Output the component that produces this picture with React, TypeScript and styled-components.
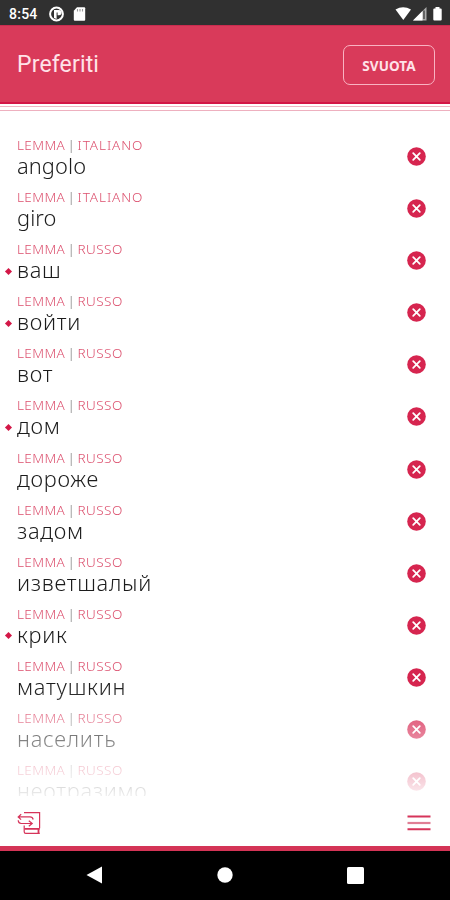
import React, { useState } from 'react';
import styled, { createGlobalStyle } from 'styled-components';

const GlobalStyle = createGlobalStyle`
  * {
    box-sizing: border-box;
  }

  body {
    margin: 0;
    background: #fff;
  }
`;

const Screen = styled.div`
  display: flex;
  flex-direction: column;
  width: 450px;
  height: 900px;
  overflow: hidden;
  background: #fff;
  font-family: 'Noto Sans', 'Open Sans', sans-serif;
`;

const StatusBar = styled.div`
  display: flex;
  align-items: center;
  flex: none;
  height: 25px;
  padding: 2px 6px 0 9px;
  background: #303030;
`;

const Clock = styled.span`
  width: 40px;
  color: #fff;
  font-family: Roboto, sans-serif;
  font-size: 14px;
  font-weight: 500;
  line-height: 24px;
  letter-spacing: 0.25px;
`;

const StatusIcons = styled.svg`
  display: block;
`;

const Spacer = styled.div`
  flex: 1;
`;

const Header = styled.header`
  display: flex;
  align-items: center;
  justify-content: space-between;
  flex: none;
  height: 79px;
  padding: 2px 15px 0 17px;
  background: #d93a5a;
  border-top: 1px solid #c92c4f;
  border-bottom: 2px solid #d31747;
`;

const HeaderLines = styled.div`
  flex: none;
  height: 7px;
  border-bottom: 1px solid #eeb0bf;
  background: linear-gradient(#fff 2px, #efb6c4 2px, #efb6c4 3px, #fff 3px);
`;

const Title = styled.h1`
  margin: 0;
  color: #ffe3e8;
  font-family: Roboto, sans-serif;
  font-size: 23px;
  font-weight: 400;
  line-height: 30px;
  letter-spacing: 0.15px;
`;

const ClearButton = styled.button`
  width: 92px;
  height: 40px;
  padding: 1px 0 0;
  border: 1px solid #f9b3c2;
  border-radius: 7px;
  background: transparent;
  color: #ffe3e8;
  font-family: inherit;
  font-size: 13.5px;
  font-weight: 700;
  letter-spacing: 0.1px;
`;

const List = styled.ul`
  flex: none;
  height: 685px;
  margin: 0;
  padding: 19.5px 0 0;
  overflow: hidden;
  list-style: none;
  mask-image: linear-gradient(#000 575px, rgba(0, 0, 0, 0.08) 685px);
`;

const Row = styled.li`
  display: flex;
  align-items: center;
  height: 52.08px;
  padding: 0 24px 0 5px;
`;

const Marker = styled.span<{ $visible: boolean }>`
  width: 12px;
  height: 7px;
  margin-top: 21px;

  &::before {
    content: '';
    display: ${({ $visible }) => ($visible ? 'block' : 'none')};
    width: 5px;
    height: 5px;
    margin: 1px;
    background: #d31747;
    transform: rotate(45deg);
  }
`;

const Entry = styled.div`
  flex: 1;
  padding-top: 2px;
`;

const Category = styled.div`
  color: #dc506e;
  font-size: 13.5px;
  font-weight: 350;
  line-height: 16px;
  letter-spacing: 0.4px;
  word-spacing: -1.6px;
  white-space: pre;
`;

const Divider = styled.span`
  color: #777;
`;

const Language = styled.span<{ $wide: boolean }>`
  letter-spacing: ${({ $wide }) => ($wide ? '0.95px' : '0.45px')};
`;

const Word = styled.div<{ $cyrillic: boolean }>`
  color: #1c1c1c;
  font-size: 21.8px;
  font-weight: 350;
  line-height: 25px;
  letter-spacing: ${({ $cyrillic }) => ($cyrillic ? '0.75px' : '0.1px')};
`;

const IconButton = styled.button`
  display: block;
  padding: 0;
  border: 0;
  background: transparent;
  line-height: 0;
`;

const Toolbar = styled.div`
  display: flex;
  align-items: center;
  justify-content: space-between;
  flex: none;
  height: 50px;
  padding: 4px 19px 0 17px;
`;

const NavBar = styled.nav`
  display: flex;
  align-items: center;
  justify-content: space-between;
  flex: none;
  height: 54px;
  padding: 0 86px 1px;
  border-top: 5px solid #d43456;
  background: #000;
`;

interface Favorite {
  word: string;
  language: 'ITALIANO' | 'RUSSO';
  marked?: boolean;
}

const favorites: Favorite[] = [
  { word: 'angolo', language: 'ITALIANO' },
  { word: 'giro', language: 'ITALIANO' },
  { word: 'ваш', language: 'RUSSO', marked: true },
  { word: 'войти', language: 'RUSSO', marked: true },
  { word: 'вот', language: 'RUSSO' },
  { word: 'дом', language: 'RUSSO', marked: true },
  { word: 'дороже', language: 'RUSSO' },
  { word: 'задом', language: 'RUSSO' },
  { word: 'изветшалый', language: 'RUSSO' },
  { word: 'крик', language: 'RUSSO', marked: true },
  { word: 'матушкин', language: 'RUSSO' },
  { word: 'населить', language: 'RUSSO' },
  { word: 'неотразимо', language: 'RUSSO' },
];

const RemoveIcon = () => (
  <svg width="19" height="19" viewBox="0 0 19 19">
    <circle cx="9.5" cy="9.5" r="9.3" fill="#d6254f" />
    <path d="M6.2 6.2l6.6 6.6M12.8 6.2l-6.6 6.6" stroke="#fff" strokeWidth="1.8" strokeLinecap="round" />
  </svg>
);

const DictionaryIcon = () => (
  <svg width="24" height="24" viewBox="0 0 24 24" fill="none" stroke="#d6345a" strokeWidth="1.2">
    <path d="M7 1.6h15.6v15.6" />
    <path d="M7.2 14.5v6.2q0 1.6 1.6 1.6h14" />
    <path d="M7.5 17.8h15.3M21.5 18v4" strokeWidth="1.8" />
    <path d="M4.2 3.2L1.2 5.9l2.9 2.7M1.5 5.9h11.5q2.6 0 3.2 2.6" />
    <path d="M1.2 9.2q.3 3.3 3 3.3h11M11.8 9.8l3.4 2.7-3.4 2.7" />
  </svg>
);

const MenuIcon = () => (
  <svg width="24" height="18" viewBox="0 0 24 18">
    <path d="M0.5 2.5h23M0.5 15.3h23" stroke="#d6345a" strokeWidth="2" />
    <path d="M0.5 9h23" stroke="#e07f95" strokeWidth="2.2" />
  </svg>
);

const App: React.FC = () => {
  const [items, setItems] = useState<Favorite[]>(favorites);

  const removeItem = (word: string) => {
    setItems(items.filter(item => item.word !== word));
  };

  return (
    <>
      <GlobalStyle />
      <Screen>
        <StatusBar>
          <Clock>8:54</Clock>
          <StatusIcons width="38" height="16" viewBox="0 0 38 16">
            <circle cx="7.5" cy="8" r="6.4" fill="none" stroke="#fff" strokeWidth="2" />
            <path d="M5 4h5a2.6 2.6 0 0 1 0 5.2H8.6V6.6H7.6V13L5 12z" fill="#fff" />
            <path d="M28 1.2h7.2q1 0 1 1v11.6q0 1-1 1h-9.4q-1 0-1-1V4.8z" fill="#fff" />
            <path d="M28.5 3v2.6M31 3v2.6M33.5 3v2.6" stroke="#999" strokeWidth="1.1" />
          </StatusIcons>
          <Spacer />
          <StatusIcons width="49" height="16" viewBox="0 0 49 16">
            <path d="M0.5 3.6Q8 -1.2 16 3.6L8.3 14z" fill="#fff" />
            <path d="M31.5 1v13.5H18z" fill="#aaa" />
            <path d="M27.5 5v9.5H18z" fill="#fff" />
            <path d="M29 4.5v8.5" stroke="#444" strokeWidth="1.4" />
            <path d="M40.5 1h4v1.5h1.2q1 0 1 1v10q0 1-1 1h-6.4q-1 0-1-1v-10q0-1 1-1h1.2z" fill="#fff" />
          </StatusIcons>
        </StatusBar>

        <Header>
          <Title>Preferiti</Title>
          <ClearButton onClick={() => setItems([])}>SVUOTA</ClearButton>
        </Header>
        <HeaderLines />

        <List>
          {items.map(({ word, language, marked }) => (
            <Row key={word}>
              <Marker $visible={!!marked} />
              <Entry>
                <Category>
                  LEMMA <Divider>|</Divider> <Language $wide={language === 'ITALIANO'}>{language}</Language>
                </Category>
                <Word $cyrillic={language === 'RUSSO'}>{word}</Word>
              </Entry>
              <IconButton aria-label="Rimuovi" onClick={() => removeItem(word)}>
                <RemoveIcon />
              </IconButton>
            </Row>
          ))}
        </List>

        <Toolbar>
          <IconButton aria-label="Dizionario">
            <DictionaryIcon />
          </IconButton>
          <IconButton aria-label="Menu">
            <MenuIcon />
          </IconButton>
        </Toolbar>

        <NavBar>
          <svg width="17" height="18" viewBox="0 0 17 18">
            <path d="M16 0.5v17L0.5 9z" fill="#fff" />
          </svg>
          <svg width="16" height="16" viewBox="0 0 16 16">
            <circle cx="8" cy="8" r="7.7" fill="#fff" />
          </svg>
          <svg width="17" height="17" viewBox="0 0 17 17">
            <rect width="17" height="17" rx="1.5" fill="#fff" />
          </svg>
        </NavBar>
      </Screen>
    </>
  );
};

export default App;
